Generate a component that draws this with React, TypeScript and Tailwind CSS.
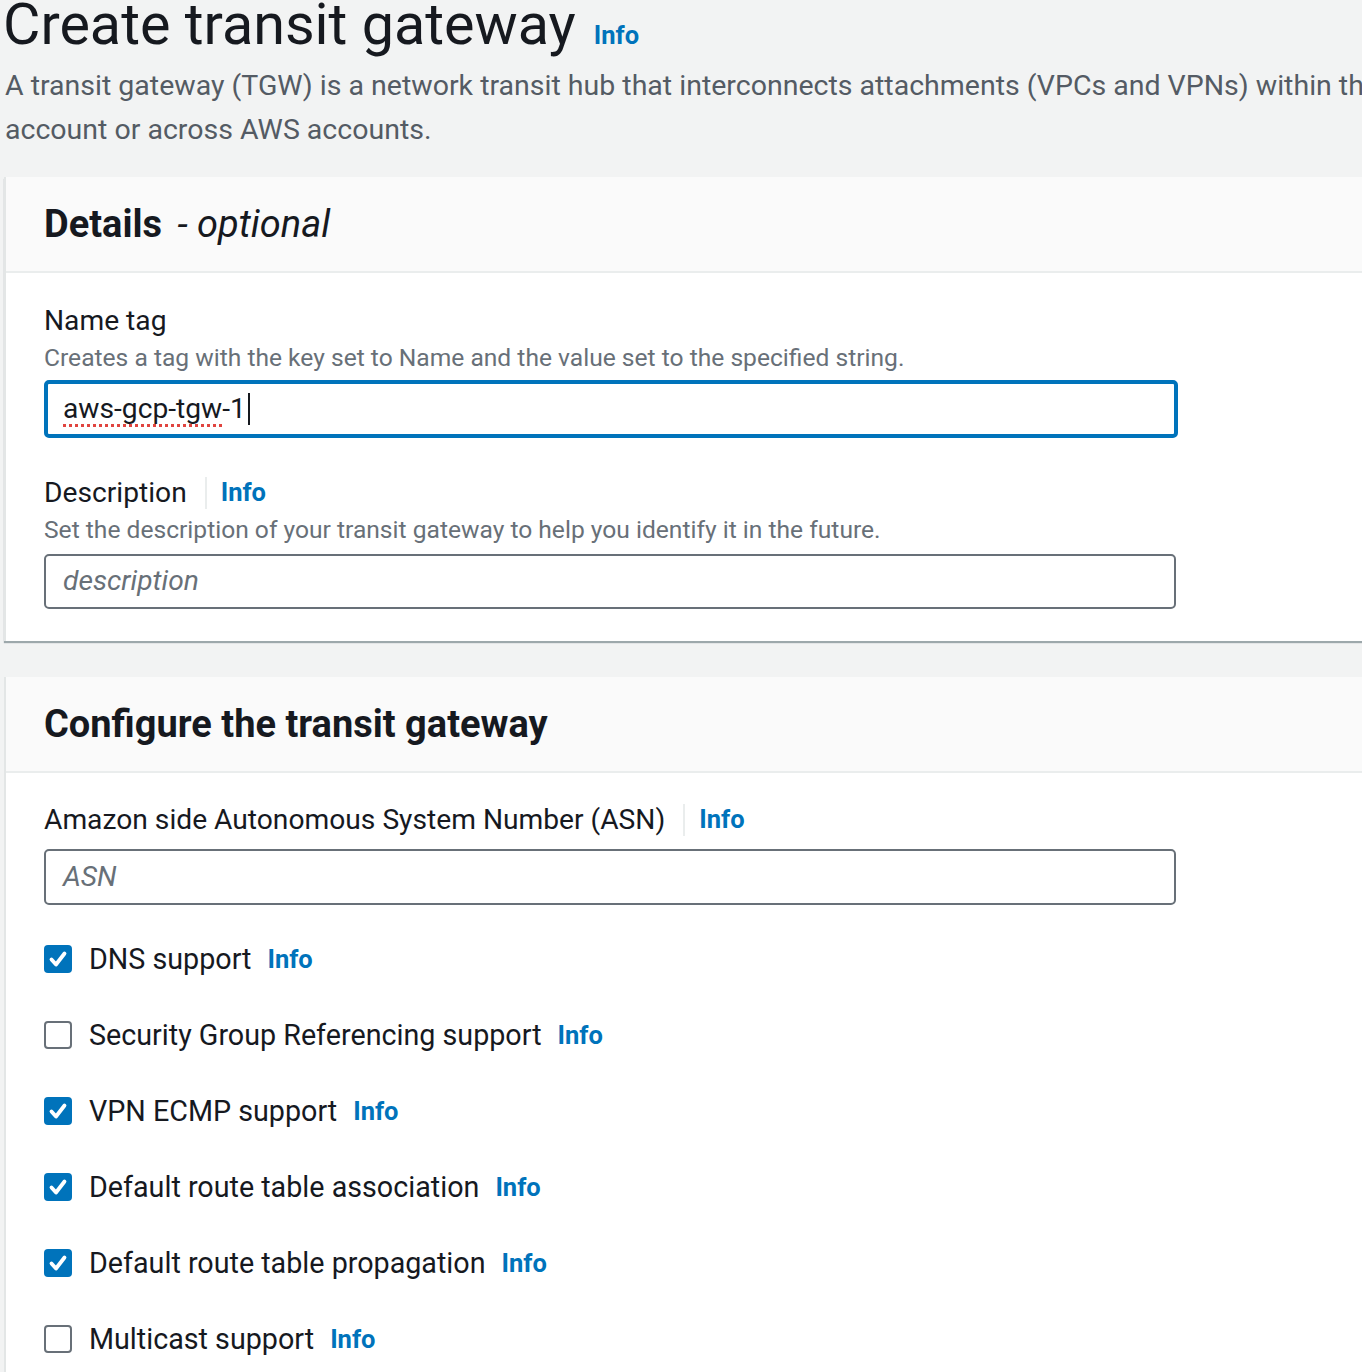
import React from 'react';

const font = { fontFamily: 'Roboto, "Liberation Sans", sans-serif' };

function Info() {
  return <span className="text-[25.5px] font-bold text-[#0073bb] leading-none">Info</span>;
}

function Check({ checked }: { checked: boolean }) {
  if (checked) {
    return (
      <span className="w-[28px] h-[28px] rounded-[4px] bg-[#0073bb] flex items-center justify-center shrink-0">
        <svg width="28" height="28" viewBox="0 0 28 28" fill="none">
          <path d="M7.5 14.5l4.5 5 8.5-11" stroke="white" strokeWidth="3.8" strokeLinecap="round" strokeLinejoin="round" />
        </svg>
      </span>
    );
  }
  return <span className="w-[28px] h-[28px] rounded-[4px] border-[2px] border-[#687078] bg-white shrink-0" />;
}

const options = [
  { label: 'DNS support', checked: true },
  { label: 'Security Group Referencing support', checked: false },
  { label: 'VPN ECMP support', checked: true },
  { label: 'Default route table association', checked: true },
  { label: 'Default route table propagation', checked: true },
  { label: 'Multicast support', checked: false },
];

export default function App() {
  return (
    <div className="w-full min-h-screen overflow-hidden bg-[#f2f3f3] text-[#16191f]" style={font}>
      <div className="w-[1500px] pl-[3px]">
        {/* Page header */}
        <div className="flex items-baseline gap-[18px] mt-[-7px]">
          <h1 className="text-[57.5px] leading-[64px] text-[#16191f]">Create transit gateway</h1>
          <Info />
        </div>
        <p className="text-[28.5px] leading-[44px] text-[#545b64] pl-[2px] mt-[7px]">
          <span className="whitespace-nowrap">A transit gateway (TGW) is a network transit hub that interconnects attachments (VPCs and VPNs) within the same</span>
          <br />
          account or across AWS accounts.
        </p>

        {/* Details */}
        <section className="mt-[25px] ml-[1px] bg-white border-l-[2px] border-[#e3e6e6] shadow-[0_2px_1px_0_rgba(0,28,36,0.35)]">
          <div className="h-[96px] bg-[#fafafa] border-b-[2px] border-[#eaeded] flex items-center px-[38px]">
            <h2 className="text-[38px] font-bold">
              Details <span className="font-normal italic ml-[6px]">- optional</span>
            </h2>
          </div>
          <div className="px-[38px] pt-[30px] pb-[32px]">
            <div className="text-[28.2px] leading-[36px]">Name tag</div>
            <div className="text-[24.6px] leading-[36px] text-[#687078] mt-[1px]">
              Creates a tag with the key set to Name and the value set to the specified string.
            </div>
            <div className="mt-[4px] w-[1134px] h-[58px] rounded-[5px] border-[4px] border-[#0073bb] flex items-center px-[15px] text-[28.2px]">
              <span className="border-b-[3px] border-dotted border-[#e0443f] leading-[30px] pt-[2px]">aws-gcp-tgw</span>
              <span>-1</span>
              <span className="w-[2px] h-[32px] bg-[#16191f] ml-[2px]" />
            </div>

            <div className="mt-[37px] flex items-center">
              <span className="text-[28.2px] leading-[36px]">Description</span>
              <span className="w-[2px] h-[32px] bg-[#eaeded] ml-[18px] mr-[14px]" />
              <Info />
            </div>
            <div className="text-[24.6px] leading-[36px] text-[#687078] mt-[1px]">
              Set the description of your transit gateway to help you identify it in the future.
            </div>
            <div className="mt-[6px] w-[1132px] h-[55px] rounded-[5px] border-[2px] border-[#687078] flex items-center px-[17px] text-[28.2px] italic text-[#687078]">
              description
            </div>
          </div>
        </section>

        {/* Configure */}
        <section className="mt-[36px] ml-[1px] bg-white border-l-[2px] border-[#e3e6e6] pb-[40px]">
          <div className="h-[96px] bg-[#fafafa] border-b-[2px] border-[#eaeded] flex items-center px-[38px]">
            <h2 className="text-[38px] font-bold">Configure the transit gateway</h2>
          </div>
          <div className="px-[38px] pt-[29px]">
            <div className="flex items-center">
              <span className="text-[28.2px] leading-[36px]">Amazon side Autonomous System Number (ASN)</span>
              <span className="w-[2px] h-[32px] bg-[#eaeded] ml-[18px] mr-[14px]" />
              <Info />
            </div>
            <div className="mt-[11px] w-[1132px] h-[56px] rounded-[5px] border-[2px] border-[#687078] flex items-center px-[17px] text-[28.2px] italic text-[#687078]">
              ASN
            </div>

            <div className="mt-[40px] flex flex-col gap-[48px]">
              {options.map((o) => (
                <div key={o.label} className="flex items-center h-[28px]">
                  <Check checked={o.checked} />
                  <span className="ml-[17px] text-[28.7px] leading-[36px]">{o.label}</span>
                  <span className="ml-[16px] mt-[4px]">
                    <Info />
                  </span>
                </div>
              ))}
            </div>
          </div>
        </section>
      </div>
    </div>
  );
}
